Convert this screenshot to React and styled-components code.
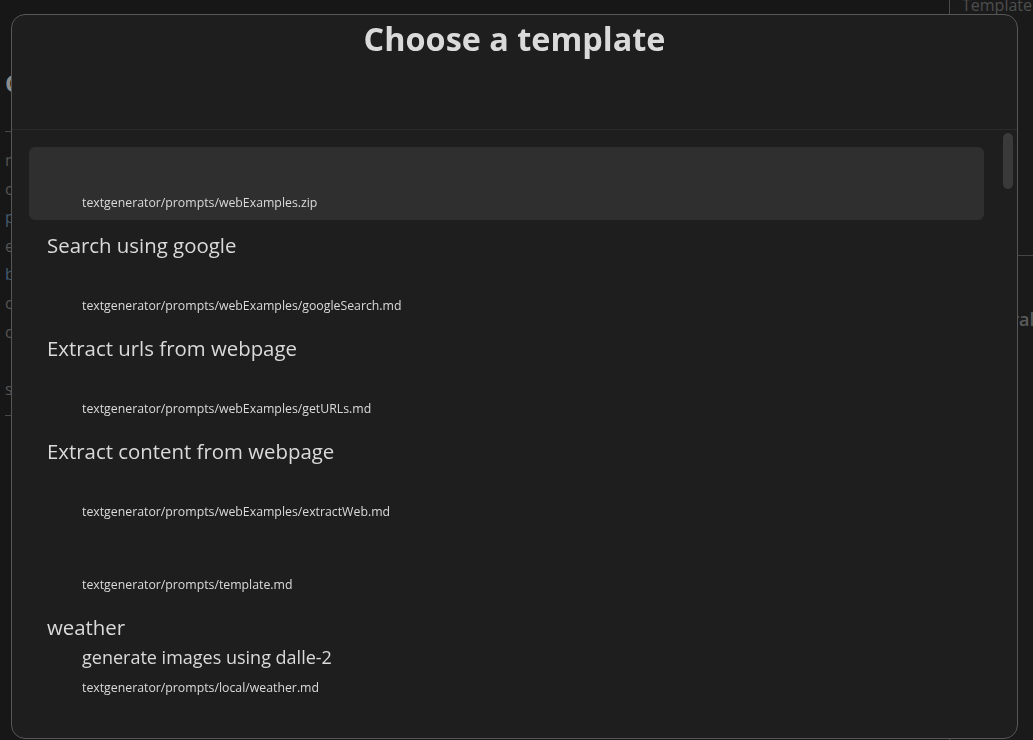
import styled, { createGlobalStyle } from "styled-components";

const GlobalStyle = createGlobalStyle`
  html, body {
    margin: 0;
    padding: 0;
    height: 100%;
    overflow: hidden;
    background: #171717;
    font-family: "Open Sans", "Noto Sans", sans-serif;
  }
  #root {
    height: 100%;
  }
`;

const Workspace = styled.div`
  display: flex;
  height: 100vh;
  background: #171717;
`;

const NotePane = styled.div`
  flex: 1;
  padding-left: 5px;
  color: #565656;
  font-size: 16px;
  overflow: hidden;
`;

const NoteHeading = styled.h1`
  margin: 66px 0 0;
  font-size: 24px;
  line-height: 34px;
  font-weight: 700;
  color: #8c8c8c;
`;

const Rule = styled.hr`
  border: none;
  border-top: 1px solid #474747;
  margin: ${(p) => p.$top}px 0 0;
`;

const NoteLines = styled.div`
  margin-top: 14px;
  line-height: 28.6px;
`;

const NoteLine = styled.div`
  min-height: 28.6px;
  color: ${(p) => (p.$link ? "#435a70" : "#545454")};
`;

const SidePane = styled.div`
  width: 83px;
  border-left: 1px solid #4a4a4a;
  background: #1a1a1a;
  display: flex;
  flex-direction: column;
  overflow: hidden;
`;

const SideTab = styled.div`
  margin-top: -6px;
  padding-left: 12px;
  height: 262px;
  font-size: 16px;
  color: #4e4e4e;
  border-bottom: 1px solid #444;
  box-sizing: border-box;
`;

const SideTitle = styled.div`
  margin-top: 49px;
  padding-left: 16px;
  font-size: 18px;
  line-height: 28px;
  font-weight: 600;
  color: #5a5a5a;
  white-space: nowrap;
`;

const Modal = styled.div`
  position: fixed;
  left: 11px;
  top: 14px;
  width: 1007px;
  height: 725px;
  box-sizing: border-box;
  background: #1e1e1e;
  border: 1px solid #575757;
  border-radius: 14px;
  display: flex;
  flex-direction: column;
  overflow: hidden;
  color: #dadada;
`;

const Header = styled.div`
  height: 114px;
  flex-shrink: 0;
  border-bottom: 1px solid #2b2b2b;
  text-align: center;
`;

const Title = styled.h2`
  margin: 0;
  font-size: 32.4px;
  line-height: 46px;
  font-weight: 700;
  color: #dadada;
`;

const ListArea = styled.div`
  flex: 1;
  min-height: 0;
  display: flex;
`;

const Scroller = styled.div`
  flex: 1;
  overflow: hidden;
  padding: 17px 16px 0 17px;
`;

const ScrollTrack = styled.div`
  width: 10px;
  padding: 3px 4px 0 3px;
`;

const ScrollThumb = styled.div`
  height: 56px;
  border-radius: 5px;
  background: #3a3a3a;
`;

const Item = styled.div`
  padding: 10px 18px 7px;
  border-radius: 6px;
  background: ${(p) => (p.$selected ? "#2f2f2f" : "transparent")};
`;

const ItemTitle = styled.div`
  font-size: 20.4px;
  line-height: 30px;
  color: #dadada;
`;

const ItemDesc = styled.div`
  margin-left: 35px;
  min-height: 30px;
  font-size: 18px;
  line-height: 30px;
  color: #dadada;
`;

const ItemPath = styled.div`
  margin: 6px 0 0 35px;
  font-size: 12.3px;
  line-height: 20px;
  color: #dadada;
`;

const visible = [
  { title: "", desc: "", path: "textgenerator/prompts/webExamples.zip", selected: true },
  { title: "Search using google", desc: "", path: "textgenerator/prompts/webExamples/googleSearch.md" },
  { title: "Extract urls from webpage", desc: "", path: "textgenerator/prompts/webExamples/getURLs.md" },
  { title: "Extract content from webpage", desc: "", path: "textgenerator/prompts/webExamples/extractWeb.md" },
  { title: "", desc: "", path: "textgenerator/prompts/template.md" },
  { title: "weather", desc: "generate images using dalle-2", path: "textgenerator/prompts/local/weather.md" },
  { title: "", desc: "", path: "textgenerator/prompts/local/dalle.md" },
];

const more = [
  "Summarize", "Outline", "Rewrite", "Simplify", "Expand", "Translate", "Brainstorm", "Title ideas",
  "Tags", "Keywords", "Questions", "Flashcards", "Email reply", "Tweet thread", "Blog post",
  "Meeting notes", "Action items", "Pros and cons", "Timeline", "Definition",
].map((name) => ({
  title: name,
  desc: "",
  path: "textgenerator/prompts/local/" + name.toLowerCase().replace(/[^a-z]+/g, "-") + ".md",
}));

const templates = [...visible, ...more];

const noteLines = [
  { text: "name: templates" },
  { text: "config: default" },
  { text: "prompts", link: true },
  { text: "examples" },
  { text: "brainstorm", link: true },
  { text: "context" },
  { text: "commands" },
  { text: "" },
  { text: "settings" },
];

export default function App() {
  return (
    <>
      <GlobalStyle />
      <Workspace>
        <NotePane>
          <NoteHeading>Community templates</NoteHeading>
          <Rule $top={31} />
          <NoteLines>
            {noteLines.map((l, i) => (
              <NoteLine key={i} $link={l.link}>
                {l.text}
              </NoteLine>
            ))}
          </NoteLines>
          <Rule $top={12} />
        </NotePane>
        <SidePane>
          <SideTab>Template</SideTab>
          <SideTitle>General</SideTitle>
        </SidePane>
      </Workspace>
      <Modal>
        <Header>
          <Title>Choose a template</Title>
        </Header>
        <ListArea>
          <Scroller>
            {templates.map((t, i) => (
              <Item key={i} $selected={t.selected}>
                {t.title && <ItemTitle>{t.title}</ItemTitle>}
                <ItemDesc>{t.desc}</ItemDesc>
                <ItemPath>{t.path}</ItemPath>
              </Item>
            ))}
          </Scroller>
          <ScrollTrack>
            <ScrollThumb />
          </ScrollTrack>
        </ListArea>
      </Modal>
    </>
  );
}
